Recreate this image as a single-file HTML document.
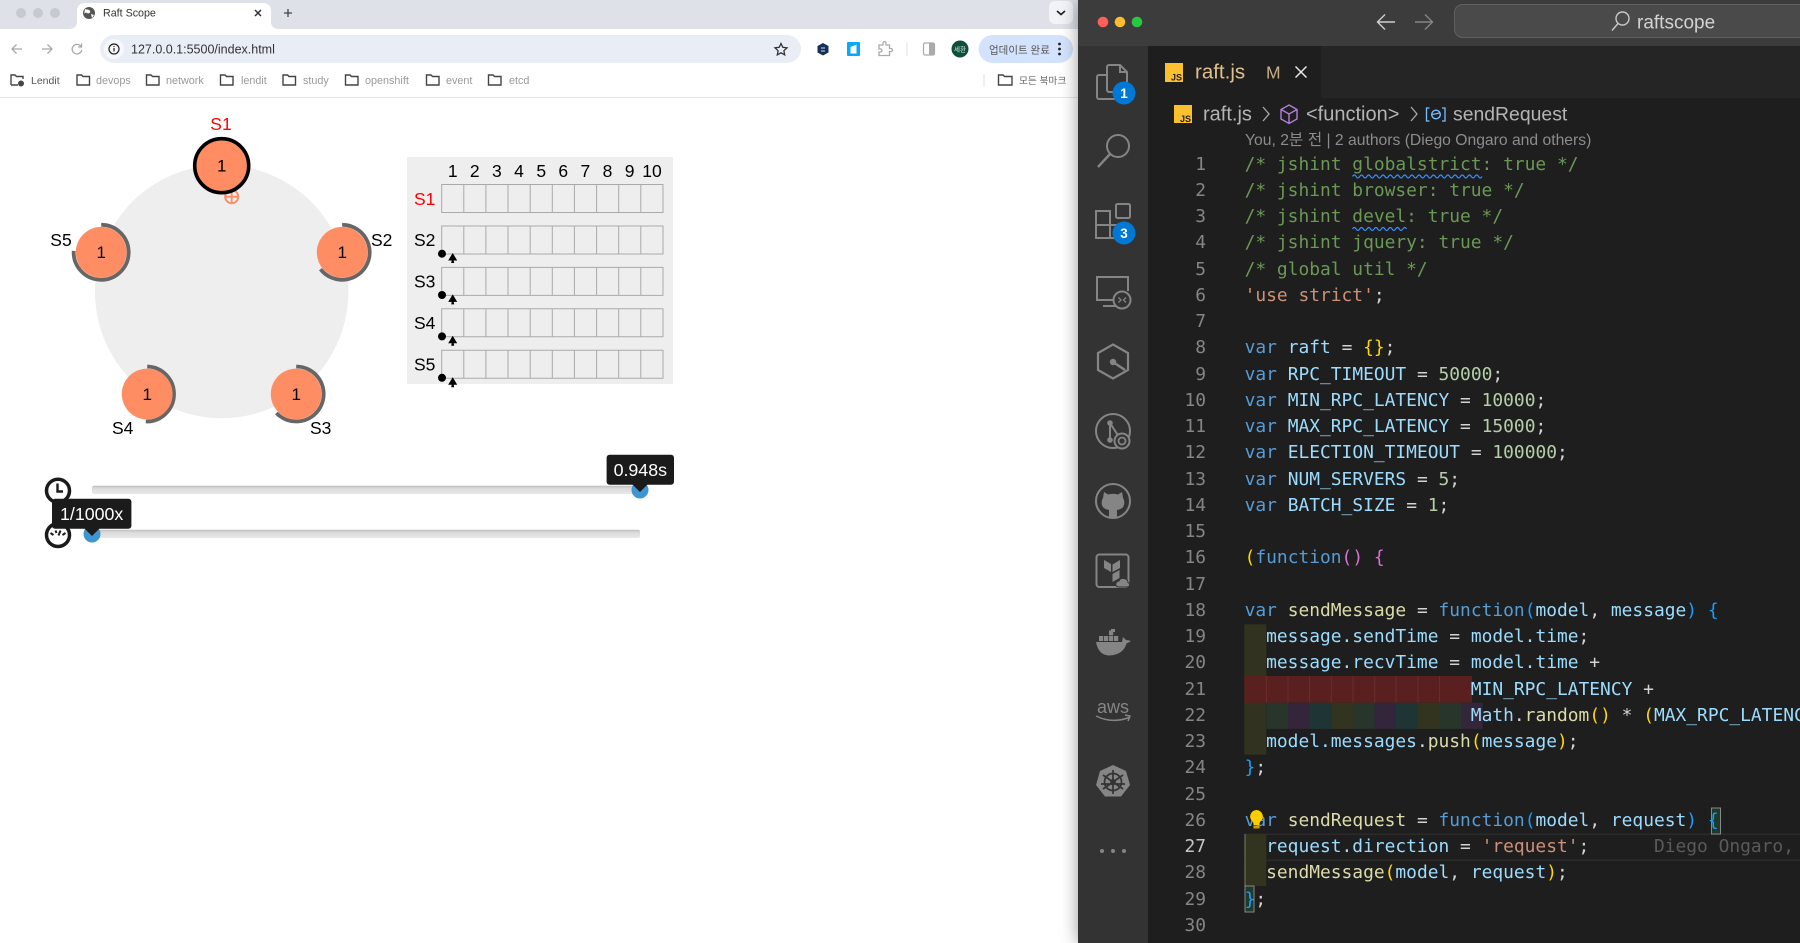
<!DOCTYPE html>
<html lang="ko"><head><meta charset="utf-8"><title>Raft Scope</title>
<style>
*{box-sizing:border-box}
html,body{margin:0;padding:0;width:1800px;height:943px;overflow:hidden;background:#fff;font-family:"Liberation Sans","Noto Sans CJK KR",sans-serif}
.abs{position:absolute}
#vs{position:absolute;left:1078px;top:0;width:722px;height:943px;background:#1e1e1e;box-shadow:0 0 16px rgba(0,0,0,.4)}
#svg1,#svg2{position:absolute;left:0;top:0}
.code,.nums{position:absolute;font-family:"DejaVu Sans Mono","Liberation Mono",monospace;font-size:17.9px;line-height:26.25px;height:791.5px;overflow:hidden}
.code{left:1244.6px;top:151.5px;width:555.4px;color:#d4d4d4}
.nums{left:1150px;top:151.5px;width:56px;text-align:right;color:#858585}
.code div,.nums div{height:26.25px;white-space:pre}
.c{color:#6a9955}.k{color:#569cd6}.v{color:#9cdcfe}.f{color:#dcdcaa}.n{color:#b5cea8}.s{color:#ce9178}
.g{color:#ffd700}.m{color:#da70d6}.b{color:#179fff}.h{color:#5a5a5a}
</style></head><body>

<svg id="svg1" width="1800" height="943" viewBox="0 0 1800 943" xmlns="http://www.w3.org/2000/svg" font-family="'Liberation Sans','Noto Sans CJK KR',sans-serif">
<!-- Chrome chrome -->
<rect x="0" y="0" width="1080" height="29" fill="#dee1e8"/>
<rect x="0" y="29" width="1080" height="36" fill="#fff"/>
<path d="M69 29c5 0 8-3 8-7V11c0-5 3-8 8-8h178c5 0 8 3 8 8v11c0 4 3 7 8 7z" fill="#fff"/>
<circle cx="21" cy="13" r="5" fill="#c6c9ce"/><circle cx="38" cy="13" r="5" fill="#c6c9ce"/><circle cx="55" cy="13" r="5" fill="#c6c9ce"/>
<circle cx="89" cy="13" r="6" fill="#555"/><path d="M85 9c2 1 4 0 5 2s-2 3-3 2-3 0-3 2M91 14l3 1-2 3z" fill="#fff"/>
<path d="M255 10l6 6M261 10l-6 6" stroke="#333" stroke-width="1.500"/>
<path d="M288 9v8M284 13h8" stroke="#444" stroke-width="1.300"/>
<path d="M22 49H12M16.500 44.500l-4.500 4.500 4.500 4.500" fill="none" stroke="#a6a9ae" stroke-width="1.300"/>
<path d="M42 49h10M47.500 44.500l4.500 4.500-4.500 4.500" fill="none" stroke="#a6a9ae" stroke-width="1.300"/>
<path d="M81 46.500a4.800 4.800 0 1 0 .7 3.500M81.500 43.500v3.500H78" fill="none" stroke="#a6a9ae" stroke-width="1.300"/>
<rect x="100" y="35" width="701" height="28" rx="14" fill="#e9edf6"/>
<circle cx="114" cy="49" r="10" fill="#f7f8fb"/>
<circle cx="114" cy="49" r="5" fill="none" stroke="#222" stroke-width="1.200"/><path d="M114 48v3.500M114 46v1" stroke="#222" stroke-width="1.200"/>
<path d="M781 43.500l1.800 3.800 4.200.5-3.100 2.900.8 4.200-3.700-2.100-3.700 2.100.8-4.200-3.100-2.900 4.200-.5z" fill="none" stroke="#333" stroke-width="1.300"/>
<path d="M823 43l5.500 3v6.500l-5.500 3-5.500-3V46z" fill="#17305a"/><path d="M821 48h4M821 51h4" stroke="#cde" stroke-width="1"/>
<rect x="847" y="42" width="13" height="14" rx="1" fill="#0aa9f5"/><path d="M850.500 53.500V47l6-2.500v9z" fill="#fff"/>
<path d="M879 45h4v-2a1.500 1.500 0 0 1 3 0v2h3.500v3.500h1.500a1.500 1.500 0 0 1 0 3h-1.500v4H879v-3.500h1.500a1.500 1.500 0 0 0 0-3H879z" fill="none" stroke="#aaa" stroke-width="1.300"/>
<rect x="906.500" y="42" width="1" height="14" fill="#dbe3ef"/>
<rect x="923.500" y="43" width="11" height="12" rx="1.500" fill="#fff" stroke="#aaa" stroke-width="1.200"/><rect x="929" y="43.500" width="5" height="11" fill="#aaa"/>
<circle cx="960" cy="49" r="8.500" fill="#0d4f3a"/>
<text x="960" y="51.500" font-size="6.500" fill="#d5e5dc" text-anchor="middle">세환</text>
<rect x="978.600" y="35" width="94.400" height="28" rx="14" fill="#d3e3fd"/>
<circle cx="1059.500" cy="44" r="1.400" fill="#222"/><circle cx="1059.500" cy="49" r="1.400" fill="#222"/><circle cx="1059.500" cy="54" r="1.400" fill="#222"/>
<rect x="1049" y="1" width="24" height="23" rx="6" fill="#f1f3f6"/>
<path d="M1057 11l4 3.500 4-3.500" fill="none" stroke="#222" stroke-width="1.700"/>
<!-- bookmark bar -->
<rect x="0" y="97" width="1080" height="1" fill="#e6e6e6"/>
<g fill="none" stroke="#444" stroke-width="1.400">
<path d="M11 85V75h4l1.500 1.500H23V79M11 85h7"/><circle cx="21" cy="83.500" r="2.300" fill="#444"/>
<path d="M77 75h4.500l1.500 1.500h6.500v8.500H77z"/>
<path d="M146.500 75h4.500l1.500 1.500H159v8.500h-12.500z"/>
<path d="M220.500 75h4.500l1.500 1.500H233v8.500h-12.500z"/>
<path d="M283 75h4.500l1.500 1.500h6.500v8.500H283z"/>
<path d="M345.500 75h4.500l1.500 1.500H358v8.500h-12.500z"/>
<path d="M426.500 75h4.500l1.500 1.500H439v8.500h-12.500z"/>
<path d="M488.500 75h4.500l1.500 1.500H501v8.500h-12.500z"/>
<path d="M998.500 75h4.500l1.500 1.500h7.500v8.500h-13.500z"/>
</g>
<rect x="983.500" y="74" width="1" height="13" fill="#d7e3f4"/>
<g font-size="10.800" fill="#9a9a9a">
<text x="31" y="84" fill="#555" font-size="10.500">Lendit</text>
<text x="96" y="84">devops</text><text x="166" y="84">network</text><text x="241" y="84">lendit</text><text x="303" y="84">study</text><text x="365" y="84">openshift</text><text x="446" y="84">event</text><text x="509" y="84">etcd</text>
<text x="1019" y="84" fill="#666" font-size="9.700">모든 북마크</text>
</g>
<text x="103" y="16.500" font-size="10.700" fill="#333">Raft Scope</text>
<text x="131" y="53.500" font-size="12.500" fill="#333">127.0.0.1:5500/index.html</text>
<text x="989" y="53.500" font-size="10.500" fill="#555">업데이트 완료</text>

<!-- Raft ring -->
<circle cx="221.700" cy="291.500" r="126.700" fill="#eee"/>
<circle cx="231.700" cy="196.700" r="6.500" fill="none" stroke="#ff8c62" stroke-width="2"/><path d="M225.200 196.700h13M231.700 190.200v13" stroke="#ff8c62" stroke-width="1.800"/>
<circle cx="221.700" cy="165.700" r="26" fill="#ff8c62"/>
<circle cx="221.700" cy="165.700" r="27" fill="none" stroke="#000" stroke-width="3.600"/>
<g fill="none" stroke="#666" stroke-width="3.800">
<path d="M342.200 224.800A27.500 27.500 0 1 1 320.500 269.200"/>
<path d="M296.200 366.500A27.500 27.500 0 1 1 276.400 413.100"/>
<path d="M147.200 366.500A27.500 27.500 0 0 1 145.800 421.500"/>
<path d="M101.200 224.800A27.500 27.500 0 1 1 73.700 250.900"/>
</g>
<g fill="#fe8d63">
<circle cx="342.200" cy="252.300" r="25.400"/><circle cx="296.200" cy="394" r="25.400"/><circle cx="147.200" cy="394" r="25.400"/><circle cx="101.200" cy="252.300" r="25.400"/>
</g>
<g font-size="17" text-anchor="middle" fill="#000">
<text x="221.700" y="171.500">1</text><text x="342.200" y="258">1</text><text x="296.200" y="400">1</text><text x="147.200" y="400">1</text><text x="101.200" y="258">1</text>
</g>
<g font-size="17.500" text-anchor="middle" fill="#000">
<text x="221" y="130" fill="#f00">S1</text><text x="381.700" y="246">S2</text><text x="320.700" y="434">S3</text><text x="122.700" y="434">S4</text><text x="61" y="246">S5</text>
</g>

<!-- Log table -->
<rect x="407" y="157" width="266" height="227" fill="#eee"/>
<g fill="none" stroke="#aaa" stroke-width="1">
<path d="M441.700 184.500h221.300v28h-221.300zM463.800 184.500v28M485.900 184.500v28M508 184.500v28M530.200 184.500v28M552.300 184.500v28M574.400 184.500v28M596.600 184.500v28M618.700 184.500v28M640.800 184.500v28"/>
<path d="M441.700 226h221.300v28h-221.300zM463.800 226v28M485.900 226v28M508 226v28M530.200 226v28M552.300 226v28M574.400 226v28M596.600 226v28M618.700 226v28M640.800 226v28"/>
<path d="M441.700 267.400h221.300v28h-221.300zM463.800 267.400v28M485.900 267.400v28M508 267.400v28M530.200 267.400v28M552.300 267.400v28M574.400 267.400v28M596.600 267.400v28M618.700 267.400v28M640.800 267.400v28"/>
<path d="M441.700 308.800h221.300v28h-221.300zM463.800 308.800v28M485.900 308.800v28M508 308.800v28M530.200 308.800v28M552.300 308.800v28M574.400 308.800v28M596.600 308.800v28M618.700 308.800v28M640.800 308.800v28"/>
<path d="M441.700 350.200h221.300v28h-221.300zM463.800 350.200v28M485.900 350.200v28M508 350.200v28M530.200 350.200v28M552.300 350.200v28M574.400 350.200v28M596.600 350.200v28M618.700 350.200v28M640.800 350.200v28"/>
</g>
<g font-size="17.500" text-anchor="middle" fill="#000">
<text x="452.700" y="177">1</text><text x="474.800" y="177">2</text><text x="496.900" y="177">3</text><text x="519" y="177">4</text><text x="541.200" y="177">5</text><text x="563.300" y="177">6</text><text x="585.400" y="177">7</text><text x="607.500" y="177">8</text><text x="629.600" y="177">9</text><text x="652" y="177">10</text>
</g>
<g font-size="17.500" fill="#000">
<text x="414" y="205" fill="#f00">S1</text><text x="414" y="246">S2</text><text x="414" y="287.500">S3</text><text x="414" y="329">S4</text><text x="414" y="370.500">S5</text>
</g>
<g fill="#000">
<circle cx="442" cy="253.700" r="4"/><circle cx="442" cy="295" r="4"/><circle cx="442" cy="336.400" r="4"/><circle cx="442" cy="377.800" r="4"/>
<path d="M452.700 253l4.500 7.500h-3.500l.5 2.500h-3l.5-2.500h-3.500z"/>
<path d="M452.700 294.400l4.500 7.500h-3.500l.5 2.500h-3l.5-2.500h-3.500z"/>
<path d="M452.700 335.800l4.500 7.500h-3.500l.5 2.500h-3l.5-2.500h-3.500z"/>
<path d="M452.700 377.200l4.500 7.500h-3.500l.5 2.500h-3l.5-2.500h-3.500z"/>
</g>

<!-- Sliders -->
<defs><linearGradient id="tr" x1="0" y1="0" x2="0" y2="1"><stop offset="0" stop-color="#bdbdbd"/><stop offset=".35" stop-color="#dcdcdc"/><stop offset="1" stop-color="#e8e8e8"/></linearGradient></defs>
<rect x="92" y="485.700" width="548" height="8.300" rx="2" fill="url(#tr)"/>
<rect x="92" y="529.700" width="548" height="8.300" rx="2" fill="url(#tr)"/>
<circle cx="640" cy="490" r="8.500" fill="#3f95d1"/>
<circle cx="92" cy="534" r="8.500" fill="#3f95d1"/>
<circle cx="58" cy="490.700" r="11.500" fill="#fff" stroke="#1a1a1a" stroke-width="3.500"/>
<path d="M57.500 483.500v8h5.500" fill="none" stroke="#1a1a1a" stroke-width="2.400"/>
<circle cx="58" cy="535" r="11.500" fill="#fff" stroke="#1a1a1a" stroke-width="3.500"/>
<path d="M50.500 533l3 2M65.500 533l-3 2M55.500 530.500l1 2.500M60.500 530.500l-2 5" stroke="#1a1a1a" stroke-width="2"/>
<rect x="606.600" y="454.700" width="67.400" height="30" rx="3" fill="#1b1b1b"/>
<path d="M632.500 484.500h15l-7.500 7.500z" fill="#1b1b1b"/>
<rect x="52" y="498.700" width="79.400" height="30" rx="3" fill="#1b1b1b"/>
<path d="M84.500 528.500h15l-7.500 7.500z" fill="#1b1b1b"/>
<text x="640.300" y="476" font-size="17.800" fill="#fff" text-anchor="middle">0.948s</text>
<text x="91.700" y="520" font-size="17.800" fill="#fff" text-anchor="middle">1/1000x</text>
</svg>

<div id="vs"></div>

<svg id="svg2" width="1800" height="943" viewBox="0 0 1800 943" xmlns="http://www.w3.org/2000/svg" font-family="'Liberation Sans','Noto Sans CJK KR',sans-serif">
<!-- title bar -->
<rect x="1078" y="0" width="722" height="46" fill="#3c3c3c"/>
<circle cx="1103" cy="22" r="5.300" fill="#ff5f57"/><circle cx="1120" cy="22" r="5.300" fill="#febc2e"/><circle cx="1137" cy="22" r="5.300" fill="#28c840"/>
<path d="M1395 22h-17M1385 14.500l-7.500 7.500 7.500 7.500" fill="none" stroke="#cfcfcf" stroke-width="1.400"/>
<path d="M1415 22h17M1425 14.500l7.500 7.500-7.500 7.500" fill="none" stroke="#858585" stroke-width="1.400"/>
<rect x="1454.500" y="4.500" width="360" height="33" rx="8" fill="#4a4a4a" stroke="#5f5f5f"/>
<circle cx="1622.500" cy="18.500" r="6.500" fill="none" stroke="#c8c8c8" stroke-width="1.400"/><path d="M1618 23.500l-6 7" stroke="#c8c8c8" stroke-width="1.400"/>
<text x="1637" y="28.500" font-size="19" fill="#d2d2d2">raftscope</text>
<!-- activity -->
<rect x="1078" y="46" width="70" height="897" fill="#333"/>
<!-- tabs -->
<rect x="1148" y="46" width="652" height="52" fill="#252526"/>
<rect x="1148" y="46" width="173" height="52" fill="#1e1e1e"/>
<rect x="1165" y="63" width="18" height="19" fill="#fbc02d"/>
<text x="1182" y="80.500" font-size="9" font-weight="bold" fill="#222" text-anchor="end">JS</text>
<text x="1195" y="78.500" font-size="20.500" fill="#e2c08d">raft.js</text>
<text x="1266" y="78.500" font-size="17.500" fill="#c9ae84">M</text>
<path d="M1295.500 66.500l11 11M1306.500 66.500l-11 11" stroke="#e8e8e8" stroke-width="1.500"/>
<!-- breadcrumb -->
<rect x="1174" y="105" width="18" height="18" fill="#fbc02d"/>
<text x="1191" y="122" font-size="9" font-weight="bold" fill="#222" text-anchor="end">JS</text>
<g font-size="20" fill="#b4b4b4">
<text x="1203" y="120.500">raft.js</text><text x="1306" y="120.500">&lt;function&gt;</text><text x="1453" y="120.500" font-size="19.400">sendRequest</text>
</g>
<path d="M1263 107l6 7-6 7M1411 107l6 7-6 7" fill="none" stroke="#aaa" stroke-width="1.300"/>
<path d="M1289 105l8 4.500v9.500l-8 4.500-8-4.500v-9.500zM1281 109.500l8 4.500 8-4.500M1289 114v9.500" fill="none" stroke="#b180d7" stroke-width="1.400"/>
<path d="M1429.500 108h-3v13h3M1442 108h3v13h-3" fill="none" stroke="#75beff" stroke-width="1.300"/>
<circle cx="1436" cy="114.500" r="4.300" fill="none" stroke="#75beff" stroke-width="1.400"/><path d="M1432.500 114.500l7-1.500" stroke="#75beff" stroke-width="1.300"/>
<text x="1245" y="145" font-size="15.700" fill="#8c8c8c">You, 2분 전 | 2 authors (Diego Ongaro and others)</text>

<!-- activity icons -->
<g fill="none" stroke="#858585" stroke-width="2">
<path d="M1107 90V67a2 2 0 0 1 2-2h11l7 7v18a2 2 0 0 1-2 2h-16a2 2 0 0 1-2-2zM1120 65v7h7"/>
<path d="M1107 75h-8a2 2 0 0 0-2 2v20a2 2 0 0 0 2 2h16a2 2 0 0 0 2-2v-5"/>
<circle cx="1118" cy="146" r="11"/><path d="M1110 154l-12 13" stroke-width="2.400"/>
<path d="M1096 211h14v27h-14zM1096 225h27v13h-13"/>
<rect x="1116" y="204" width="14" height="14" rx="1.500"/>
<path d="M1114 300h-17v-23h31v14M1103 306h13"/>
<circle cx="1122" cy="300" r="8.500" fill="#333"/><path d="M1118.500 297.500l2.500 2.500-2.500 2.500M1126 297.500l-2.500 2.500 2.500 2.500" stroke-width="1.300"/>
<path d="M1113 344.500l15 8.500v17l-15 8.500-15-8.500v-17z" stroke-width="2.200"/>
<path d="M1113 362l12 8" stroke-width="2.400"/>
<circle cx="1113" cy="431" r="17"/>
<path d="M1110 423v17M1110 423l11 17" stroke-width="2"/>
<circle cx="1122" cy="441" r="7.500" fill="#333"/><circle cx="1122" cy="441" r="3.500" stroke-width="1.800"/>
<circle cx="1113" cy="501" r="17"/>
<rect x="1096.500" y="554.500" width="32" height="32.500" rx="3"/>
</g>
<g fill="#858585">
<circle cx="1110" cy="423" r="2.800"/><circle cx="1110" cy="440" r="2.800"/>
<circle cx="1113" cy="362" r="3.200"/>
<path d="M1104 492l4 2.500q5-1.500 10 0l4-2.500 1 6q2 3 1 7-1 4-7 5v8h-8v-8q-6-1-7-5-1-4 1-7z"/>
<path d="M1104 560l7 4v8l-7-4zM1112.500 564.500l7.500-4.500v8l-7.500 4zM1112.500 574l7-4v8l-7 4z"/>
<path d="M1118 587q-3-1-2-4 1-2 3-2 1-3 5-2.500 4 .5 4 4 2 .5 1.500 3-.5 1.500-2 1.500z" stroke="#333" stroke-width="1"/>
<path d="M1096 642H1122l1-5 3 3 4 .5.5 1-4 2q-3 11-17 12q-11 0-13.500-13.500z"/>
<rect x="1099" y="636" width="4.200" height="5"/><rect x="1104" y="636" width="4.200" height="5"/><rect x="1109" y="636" width="4.200" height="5"/><rect x="1114" y="636" width="4.200" height="5"/><rect x="1109" y="630.500" width="4.200" height="4.800"/><rect x="1111" y="629" width="4" height="3"/>
<path d="M1113 765l13 6 4 14-9 11.500h-16l-9-11.500 4-14z"/>
<circle cx="1102" cy="851" r="2"/><circle cx="1113" cy="851" r="2"/><circle cx="1124" cy="851" r="2"/>
</g>
<text x="1113" y="713" font-size="18" fill="#858585" text-anchor="middle">aws</text>
<path d="M1096 716q16 8 33 1.500M1125 715l5 1-2 5" fill="none" stroke="#858585" stroke-width="1.500"/>
<g fill="none" stroke="#333" stroke-width="1.700">
<circle cx="1113" cy="782" r="8.500"/><circle cx="1113" cy="782" r="2"/>
<path d="M1113 770v24M1103 775l20 14M1123 775l-20 14M1101 784h24"/>
</g>
<circle cx="1124" cy="93" r="11.500" fill="#0078d4"/><text x="1124" y="98" font-size="13.500" font-weight="bold" fill="#fff" text-anchor="middle">1</text>
<circle cx="1124" cy="233" r="11.500" fill="#0078d4"/><text x="1124" y="238" font-size="13.500" font-weight="bold" fill="#fff" text-anchor="middle">3</text>

<!-- editor highlights -->
<rect x="1244" y="833.500" width="556" height="1.500" fill="#2b2b2b"/>
<rect x="1244" y="859.500" width="556" height="1.500" fill="#2b2b2b"/>
<rect x="1244.300" y="624.300" width="22" height="130.400" fill="#33341f" fill-opacity=".9"/>
<rect x="1244.300" y="834" width="22" height="52" fill="#33341f"/>
<rect x="1244.300" y="834" width="1.500" height="52" fill="#5f5f4e"/>
<rect x="1244.300" y="676" width="227.700" height="26.700" fill="#5a1f1f"/>
<path d="M1266.400 676v26.700M1288 676v26.700M1309.500 676v26.700M1331.300 676v26.700M1353 676v26.700M1374.700 676v26.700M1396 676v26.700M1418 676v26.700M1439.500 676v26.700" stroke="#6b2c2c"/>
<rect x="1266.400" y="702.700" width="21.700" height="26.200" fill="#28352a"/>
<rect x="1288" y="702.700" width="21.500" height="26.200" fill="#33253a"/>
<rect x="1309.500" y="702.700" width="21.800" height="26.200" fill="#1f3535"/>
<rect x="1331.300" y="702.700" width="21.700" height="26.200" fill="#33341f"/>
<rect x="1353" y="702.700" width="21.700" height="26.200" fill="#28352a"/>
<rect x="1374.700" y="702.700" width="21.300" height="26.200" fill="#33253a"/>
<rect x="1396" y="702.700" width="22" height="26.200" fill="#1f3535"/>
<rect x="1418" y="702.700" width="21.500" height="26.200" fill="#33341f"/>
<rect x="1439.500" y="702.700" width="21.700" height="26.200" fill="#28352a"/>
<rect x="1461" y="702.700" width="21.700" height="26.200" fill="#33253a"/>
<rect x="1711.500" y="808" width="9" height="26" fill="#1f3a2a" stroke="#888" stroke-width="1"/>
<rect x="1245" y="886" width="9" height="26" fill="#1f3a2a" stroke="#888" stroke-width="1"/>
<!-- squiggles -->
<path d="M1352.500 176.500q1.800-3 3.600 0t3.600 0 3.600 0 3.600 0 3.600 0 3.600 0 3.600 0 3.600 0 3.600 0 3.600 0 3.600 0 3.600 0 3.600 0 3.600 0 3.600 0 3.600 0 3.600 0 3.600 0 3.600 0 3.600 0 3.600 0 3.600 0 3.600 0 3.600 0 3.600 0 3.600 0 3.600 0 3.600 0 3.600 0 3.600 0 3.600 0 3.600 0 3.600 0 3.600 0 3.600 0 3.600 0" fill="none" stroke="#3794ff" stroke-width="1.200"/>
<path d="M1352.500 229q1.800-3 3.600 0t3.600 0 3.600 0 3.600 0 3.600 0 3.600 0 3.600 0 3.600 0 3.600 0 3.600 0 3.600 0 3.600 0 3.600 0 3.600 0 3.600 0" fill="none" stroke="#3794ff" stroke-width="1.200"/>
</svg>

<div class="nums"><div>1</div><div>2</div><div>3</div><div>4</div><div>5</div><div>6</div><div>7</div><div>8</div><div>9</div><div>10</div><div>11</div><div>12</div><div>13</div><div>14</div><div>15</div><div>16</div><div>17</div><div>18</div><div>19</div><div>20</div><div>21</div><div>22</div><div>23</div><div>24</div><div>25</div><div>26</div><div style="color:#c6c6c6">27</div><div>28</div><div>29</div><div>30</div><div>31</div></div>

<div class="code">
<div class="c">/* jshint globalstrict: true */</div>
<div class="c">/* jshint browser: true */</div>
<div class="c">/* jshint devel: true */</div>
<div class="c">/* jshint jquery: true */</div>
<div class="c">/* global util */</div>
<div><span class="s">'use strict'</span>;</div>
<div> </div>
<div><span class="k">var</span> <span class="v">raft</span> = <span class="g">{}</span>;</div>
<div><span class="k">var</span> <span class="v">RPC_TIMEOUT</span> = <span class="n">50000</span>;</div>
<div><span class="k">var</span> <span class="v">MIN_RPC_LATENCY</span> = <span class="n">10000</span>;</div>
<div><span class="k">var</span> <span class="v">MAX_RPC_LATENCY</span> = <span class="n">15000</span>;</div>
<div><span class="k">var</span> <span class="v">ELECTION_TIMEOUT</span> = <span class="n">100000</span>;</div>
<div><span class="k">var</span> <span class="v">NUM_SERVERS</span> = <span class="n">5</span>;</div>
<div><span class="k">var</span> <span class="v">BATCH_SIZE</span> = <span class="n">1</span>;</div>
<div> </div>
<div><span class="g">(</span><span class="k">function</span><span class="m">()</span> <span class="m">{</span></div>
<div> </div>
<div><span class="k">var</span> <span class="f">sendMessage</span> = <span class="k">function</span><span class="b">(</span><span class="v">model</span>, <span class="v">message</span><span class="b">)</span> <span class="b">{</span></div>
<div>  <span class="v">message.sendTime</span> = <span class="v">model.time</span>;</div>
<div>  <span class="v">message.recvTime</span> = <span class="v">model.time</span> +</div>
<div>                     <span class="v">MIN_RPC_LATENCY</span> +</div>
<div>                     <span class="v">Math</span>.<span class="f">random</span><span class="g">()</span> * <span class="g">(</span><span class="v">MAX_RPC_LATENCY</span> - <span class="v">MIN_RPC_LATENCY</span><span class="g">)</span>;</div>
<div>  <span class="v">model.messages</span>.<span class="f">push</span><span class="g">(</span><span class="v">message</span><span class="g">)</span>;</div>
<div><span class="b">}</span>;</div>
<div> </div>
<div><span class="k">var</span> <span class="f">sendRequest</span> = <span class="k">function</span><span class="b">(</span><span class="v">model</span>, <span class="v">request</span><span class="b">)</span> <span class="b">{</span></div>
<div>  <span class="v">request.direction</span> = <span class="s">'request'</span>;      <span class="h">Diego Ongaro,</span></div>
<div>  <span class="f">sendMessage</span><span class="g">(</span><span class="v">model</span>, <span class="v">request</span><span class="g">)</span>;</div>
<div><span class="b">}</span>;</div>
<div> </div>
<div><span class="k">var</span> <span class="f">sendReply</span> = <span class="k">function</span><span class="b">(</span><span class="v">model</span>, <span class="v">request</span>, <span class="v">reply</span><span class="b">)</span> <span class="b">{</span></div>
</div>

<svg class="abs" style="left:1248px;top:808px" width="18" height="22" viewBox="0 0 18 22"><path d="M8.500 2a6.500 6.500 0 0 1 4 11.500c-.8.8-1 2-1 3.500h-6c0-1.500-.2-2.700-1-3.500A6.500 6.500 0 0 1 8.500 2z" fill="#ffcc00"/><rect x="5.500" y="17.500" width="6" height="3" fill="#caa200"/></svg>
</body></html>
